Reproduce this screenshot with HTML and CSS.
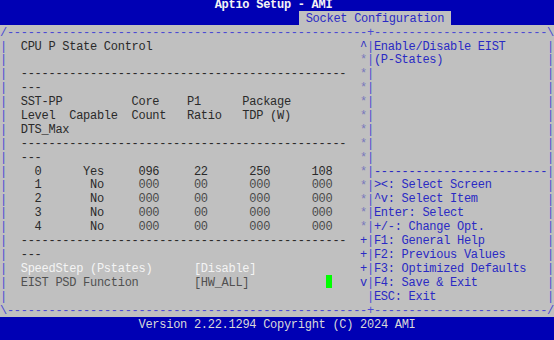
FILE: index.html
```html
<!DOCTYPE html>
<html>
<head>
<meta charset="utf-8">
<title>Aptio Setup - AMI</title>
<link rel="stylesheet" href="styles.css">
</head>
<body>
<div class="screen">
  <header class="topbar">
    <div class="ln title">Aptio Setup - AMI</div>
    <div class="tabs"><span class="tab"> Socket Configuration </span></div>
  </header>
  <main class="panel">
    <div class="ln border">/----------------------------------------------------+-------------------------\</div>
    <div class="body">
      <div class="edge">|
|
|
|
|
|
|
|
|
|
|
|
|
|
|
|
|
|
|</div>
      <div class="main-col">
        <div class="ln">CPU P State Control</div>
        <div class="ln"></div>
        <div class="ln">-----------------------------------------------</div>
        <div class="ln">---</div>
        <div class="ln">SST-PP          Core    P1      Package</div>
        <div class="ln">Level  Capable  Count   Ratio   TDP (W)</div>
        <div class="ln">DTS_Max</div>
        <div class="ln">-----------------------------------------------</div>
        <div class="ln">---</div>
        <div class="ln">  0      Yes     096     22      250      108</div>
        <div class="ln">  1       No     <span class="dim">000     00      000      000</span></div>
        <div class="ln">  2       No     <span class="dim">000     00      000      000</span></div>
        <div class="ln">  3       No     <span class="dim">000     00      000      000</span></div>
        <div class="ln">  4       No     <span class="dim">000     00      000      000</span></div>
        <div class="ln">-----------------------------------------------</div>
        <div class="ln">---</div>
        <div class="ln selected">SpeedStep (Pstates)      [Disable]</div>
        <div class="ln grayed">EIST PSD Function        [HW_ALL]           <span class="cursor"></span></div>
        <div class="ln"></div>
      </div>
      <div class="scroll"><span class="arrow">^</span>
*
*
*
*
*
*
*
*
*
*
*
*
*
<span class="arrow">+
+
+
v</span>
 </div>
      <div class="sep">|
|
|
|
|
|
|
|
|
|
|
|
|
|
|
|
|
|
|</div>
      <div class="help">
        <div class="ln">Enable/Disable EIST</div>
        <div class="ln">(P-States)</div>
        <div class="ln"></div>
        <div class="ln"></div>
        <div class="ln"></div>
        <div class="ln"></div>
        <div class="ln"></div>
        <div class="ln"></div>
        <div class="ln"></div>
        <div class="ln">-------------------------</div>
        <div class="ln">&gt;&lt;: Select Screen</div>
        <div class="ln">^v: Select Item</div>
        <div class="ln">Enter: Select</div>
        <div class="ln">+/-: Change Opt.</div>
        <div class="ln">F1: General Help</div>
        <div class="ln">F2: Previous Values</div>
        <div class="ln">F3: Optimized Defaults</div>
        <div class="ln">F4: Save &amp; Exit</div>
        <div class="ln">ESC: Exit</div>
      </div>
      <div class="edge">|
|
|
|
|
|
|
|
|
|
|
|
|
|
|
|
|
|
|</div>
    </div>
    <div class="ln border">\----------------------------------------------------+-------------------------/</div>
  </main>
  <footer class="bottombar">
    <div class="ln version">Version 2.22.1294 Copyright (C) 2024 AMI</div>
    <div class="ln"></div>
  </footer>
</div>
</body>
</html>
```

FILE: styles.css
```css
:root {
  --cw: 6.925px;
  --rh: 13.9px;
  --shift: 2px;
  --blue-bg: #0000b4;
  --grey-bg: #c0c0c0;
  --frame: #4a4ad4;
  --help: #2a2ac4;
}

html, body {
  margin: 0;
  padding: 0;
  background: var(--grey-bg);
  overflow: hidden;
}

.screen {
  width: 554px;
  margin-top: -3.15px;
  font-family: "Liberation Mono", "Courier New", monospace;
  font-size: 12px;
  letter-spacing: -0.276px;
  line-height: var(--rh);
  color: #2a2a2a;
}

.ln,
.edge,
.sep,
.scroll,
.tab {
  white-space: pre;
}

.ln {
  box-sizing: border-box;
  height: var(--rh);
  padding-top: var(--shift);
}

.topbar {
  background: var(--blue-bg);
}

.title {
  color: #f4f4f4;
  padding-left: calc(31 * var(--cw));
  font-weight: bold;
}

.tabs {
  display: flex;
  height: var(--rh);
  padding-left: calc(43 * var(--cw) + 1px);
}

.tab {
  box-sizing: border-box;
  height: var(--rh);
  padding-top: var(--shift);
  background: var(--grey-bg);
  color: var(--help);
}

.panel {
  background: var(--grey-bg);
}

.border {
  color: var(--frame);
}

.body {
  display: flex;
  height: calc(19 * var(--rh));
}

.edge,
.sep,
.scroll {
  box-sizing: border-box;
  width: var(--cw);
  padding-top: var(--shift);
}

.edge,
.sep {
  color: var(--frame);
}

.main-col {
  width: calc(49 * var(--cw));
  padding-left: calc(2 * var(--cw));
}

.scroll {
  color: #7878bc;
}

.arrow {
  color: var(--help);
}

.help {
  width: calc(25 * var(--cw));
  color: var(--help);
}

.dim {
  color: #4a4a4a;
}

.selected {
  color: #f4f4f4;
}

.grayed {
  color: #505050;
}

.cursor {
  display: inline-block;
  width: 6px;
  height: 12.6px;
  margin-left: 1px;
  margin-top: -1.6px;
  vertical-align: top;
  background: #00ff00;
}

.bottombar {
  background: var(--blue-bg);
}

.version {
  color: #d8d8d8;
  padding-left: calc(20 * var(--cw));
}
```
